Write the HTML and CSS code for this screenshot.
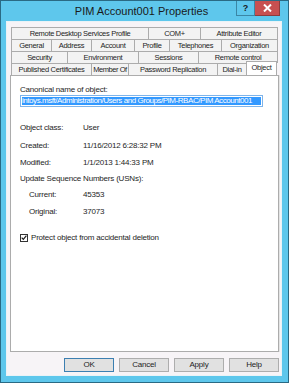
FILE: index.html
```html
<!DOCTYPE html>
<html>
<head>
<meta charset="utf-8">
<link rel="stylesheet" href="styles.css">
</head>
<body>
<div class="window">
  <div class="titlebar">
    <div class="tb-spacer"></div>
    <div class="title">PIM Account001 Properties</div>
    <div class="controls">
      <div class="ctl help">?</div>
      <div class="ctl close"><svg width="9" height="8" viewBox="0 0 9 8"><path d="M1 0.5 L8 7.5 M8 0.5 L1 7.5" stroke="#ffffff" stroke-width="2"/></svg></div>
    </div>
  </div>
  <div class="client">
    <div class="tabs">
      <div class="tabrow">
        <div class="tab t-rdsp">Remote Desktop Services Profile</div>
        <div class="tab t-com">COM+</div>
        <div class="tab t-attr">Attribute Editor</div>
      </div>
      <div class="tabrow">
        <div class="tab t-gen">General</div>
        <div class="tab t-addr">Address</div>
        <div class="tab t-acct">Account</div>
        <div class="tab t-prof">Profile</div>
        <div class="tab t-tel">Telephones</div>
        <div class="tab t-org">Organization</div>
      </div>
      <div class="tabrow">
        <div class="tab t-sec">Security</div>
        <div class="tab t-env">Environment</div>
        <div class="tab t-ses">Sessions</div>
        <div class="tab t-rc">Remote control</div>
      </div>
      <div class="tabrow front">
        <div class="tab t-pub">Published Certificates</div>
        <div class="tab t-mem">Member Of</div>
        <div class="tab t-pwd">Password Replication</div>
        <div class="tab t-dial">Dial-in</div>
        <div class="tab t-obj active">Object</div>
      </div>
    </div>
    <div class="panel">
      <div class="label">Canonical name of object:</div>
      <div class="textbox"><span class="sel">intoys.msft/Administration/Users and Groups/PIM-RBAC/PIM Account001</span></div>
      <div class="row r-class"><span class="k">Object class:</span><span class="v">User</span></div>
      <div class="row r-created"><span class="k">Created:</span><span class="v">11/16/2012 6:28:32 PM</span></div>
      <div class="row r-mod"><span class="k">Modified:</span><span class="v">1/1/2013 1:44:33 PM</span></div>
      <div class="row r-usn"><span class="k">Update Sequence Numbers (USNs):</span></div>
      <div class="row r-cur indent"><span class="k">Current:</span><span class="v">45353</span></div>
      <div class="row r-orig indent"><span class="k">Original:</span><span class="v">37073</span></div>
      <div class="check">
        <span class="box"><svg width="7" height="7" viewBox="0 0 7 7"><path d="M0.8 3.6 L2.7 5.6 L6.3 1.2" fill="none" stroke="#1a1a1a" stroke-width="1.4"/></svg></span>
        <span>Protect object from accidental deletion</span>
      </div>
    </div>
    <div class="buttons">
      <div class="btn default">OK</div>
      <div class="btn">Cancel</div>
      <div class="btn">Apply</div>
      <div class="btn">Help</div>
    </div>
  </div>
</div>
</body>
</html>
```

FILE: styles.css
```css
html, body {
  margin: 0;
  padding: 0;
  background: #5ec7ec;
}
body {
  font-family: "Liberation Sans", Arial, sans-serif;
  font-size: 8px;
  letter-spacing: -0.2px;
  color: #1e1e1e;
}
.window {
  width: 289px;
  height: 383px;
  box-sizing: border-box;
  border: 1px solid #2a6a84;
  background: #5ec7ec;
  display: flex;
  flex-direction: column;
}
.titlebar {
  height: 20px;
  display: grid;
  grid-template-columns: 1fr auto 1fr;
  align-items: start;
}
.title {
  font-size: 11px;
  letter-spacing: 0;
  color: #1a1a1a;
  line-height: 20px;
  padding-right: 6px;
}
.controls {
  justify-self: end;
  display: flex;
  margin-right: 8px;
}
.ctl {
  height: 15px;
  box-sizing: border-box;
  display: flex;
  align-items: center;
  justify-content: center;
}
.help {
  width: 19px;
  border: 1px solid #3a86a5;
  border-top: none;
  font-weight: bold;
  font-size: 9px;
  letter-spacing: 0;
  color: #1a1a1a;
}
.close {
  width: 25px;
  background: #c75050;
  border: 1px solid #8d3c3c;
  border-top: none;
  border-left: none;
}
.client {
  flex: 1;
  margin: 0 6px 6px 5px;
  background: #f7f4f7;
  padding: 6px 3px 4px 4px;
  display: flex;
  flex-direction: column;
  box-shadow: inset 0 0 0 1px #eaf3f7;
}
.tabs {
  margin: 0 1px;
  display: flex;
  flex-direction: column;
}
.tabrow {
  display: flex;
  height: 12px;
  position: relative;
}
.tabrow.front {
  z-index: 2;
}
.tab {
  box-sizing: border-box;
  height: 12px;
  border: 1px solid #acacac;
  border-bottom: none;
  background: #f3f3f3;
  margin-left: -1px;
  text-align: center;
  line-height: 11px;
  font-size: 7.5px;
  letter-spacing: -0.3px;
  white-space: nowrap;
  overflow: hidden;
}
.tab:first-child { margin-left: 0; }
.t-rdsp { width: 138px; }
.t-com { width: 53px; }
.t-attr { width: 78px; }
.t-gen { width: 41px; }
.t-addr { width: 41px; }
.t-acct { width: 44px; }
.t-prof { width: 36px; }
.t-tel { width: 53px; }
.t-org { width: 57px; }
.t-sec { width: 57px; }
.t-env { width: 72px; }
.t-ses { width: 61px; }
.t-rc { width: 80px; }
.t-pub { width: 81px; }
.t-mem { width: 38px; letter-spacing: -0.45px; }
.t-pwd { width: 90px; }
.t-dial { width: 30px; }
.t-obj { width: 30px; }
.tab.active {
  background: #ffffff;
  height: 14px;
  margin-top: -2px;
  margin-bottom: -1px;
  margin-right: -2px;
  width: 31px;
  line-height: 11px;
  position: relative;
  z-index: 3;
}
.panel {
  height: 277px;
  box-sizing: border-box;
  background: #ffffff;
  border: 1px solid #acacac;
  box-shadow: 1px 0 0 #e4e4e4;
  padding: 8px 9px 0 9px;
  position: relative;
  z-index: 1;
}
.label {
  height: 11px;
  line-height: 11px;
}
.textbox {
  width: 243px;
  height: 12px;
  box-sizing: border-box;
  border: 1px solid #7eb4ea;
  padding: 1px;
  overflow: hidden;
  white-space: nowrap;
}
.sel {
  display: block;
  background: #3399ff;
  color: #ffffff;
  height: 8px;
  line-height: 8px;
  letter-spacing: -0.45px;
}
.row {
  display: flex;
  height: 11px;
  line-height: 11px;
}
.row .k { width: 63px; white-space: nowrap; }
.row.indent .k { width: 54px; }
.indent { padding-left: 9px; }
.r-class { margin-top: 15px; }
.r-created { margin-top: 7px; }
.r-mod { margin-top: 6px; }
.r-usn { margin-top: 5px; }
.r-cur { margin-top: 5px; }
.r-orig { margin-top: 6px; }
.check {
  margin-top: 15px;
  display: flex;
  align-items: center;
  gap: 3px;
  height: 11px;
}
.box {
  width: 8px;
  height: 8px;
  box-sizing: border-box;
  border: 1px solid #333333;
  background: #ffffff;
  display: flex;
  align-items: center;
  justify-content: center;
}
.buttons {
  margin-top: 6px;
  display: flex;
  justify-content: flex-end;
  gap: 5px;
}
.btn {
  width: 50px;
  height: 14px;
  box-sizing: border-box;
  background: #e1e1e1;
  border: 1px solid #adadad;
  text-align: center;
  line-height: 12px;
}
.btn.default {
  border-color: #3c7fb1;
}
```
